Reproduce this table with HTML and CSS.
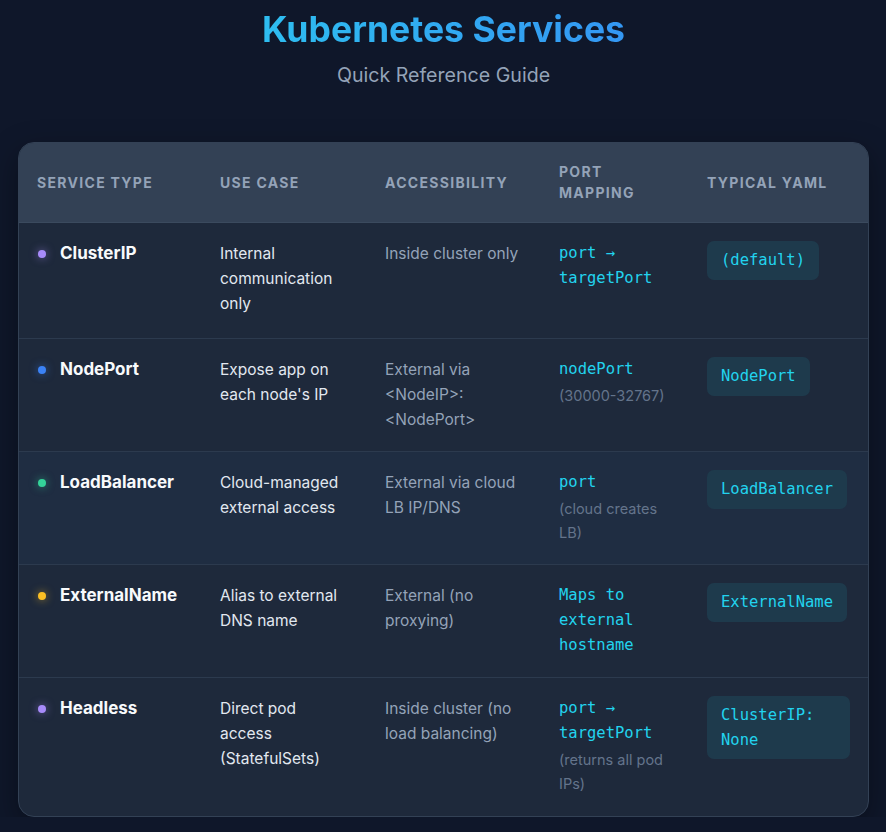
FILE: index.html
```html
<!DOCTYPE html>
<html lang="en">
<head>
<meta charset="utf-8">
<title>Kubernetes Services</title>
<link rel="stylesheet" href="styles.css">
</head>
<body>
<header class="hero">
  <h1 class="title"><span class="title-text">Kubernetes Services</span></h1>
  <p class="subtitle">Quick Reference Guide</p>
</header>
<div class="card">
  <table class="svc-table">
    <colgroup>
      <col class="c1"><col class="c2"><col class="c3"><col class="c4"><col class="c5">
    </colgroup>
    <thead>
      <tr>
        <th>Service Type</th>
        <th>Use Case</th>
        <th>Accessibility</th>
        <th>Port Mapping</th>
        <th>Typical YAML</th>
      </tr>
    </thead>
    <tbody>
      <tr class="tall">
        <td><div class="name"><span class="dot dot-purple"></span>ClusterIP</div></td>
        <td class="use">Internal communication only</td>
        <td class="access">Inside cluster only</td>
        <td><div class="port">port → targetPort</div></td>
        <td><span class="badge">(default)</span></td>
      </tr>
      <tr>
        <td><div class="name"><span class="dot dot-blue"></span>NodePort</div></td>
        <td class="use">Expose app on each node's IP</td>
        <td class="access">External via &lt;NodeIP&gt;:&lt;NodePort&gt;</td>
        <td><div class="port">nodePort</div><div class="note">(30000-32767)</div></td>
        <td><span class="badge">NodePort</span></td>
      </tr>
      <tr class="hl">
        <td><div class="name"><span class="dot dot-green"></span>LoadBalancer</div></td>
        <td class="use">Cloud-managed external access</td>
        <td class="access">External via cloud LB IP/DNS</td>
        <td><div class="port">port</div><div class="note">(cloud creates LB)</div></td>
        <td><span class="badge">LoadBalancer</span></td>
      </tr>
      <tr>
        <td><div class="name"><span class="dot dot-amber"></span>ExternalName</div></td>
        <td class="use">Alias to external DNS name</td>
        <td class="access">External (no proxying)</td>
        <td><div class="port">Maps to external hostname</div></td>
        <td><span class="badge">ExternalName</span></td>
      </tr>
      <tr class="last">
        <td><div class="name"><span class="dot dot-purple"></span>Headless</div></td>
        <td class="use">Direct pod access (StatefulSets)</td>
        <td class="access">Inside cluster (no load balancing)</td>
        <td><div class="port">port → targetPort</div><div class="note">(returns all pod IPs)</div></td>
        <td><span class="badge">ClusterIP: None</span></td>
      </tr>
    </tbody>
  </table>
</div>
</body>
</html>
```
FILE: styles.css
```css
* { box-sizing: border-box; }
html, body { margin: 0; padding: 0; }
body {
  background: #0f172a;
  font-family: Inter, "Noto Sans", sans-serif;
  color: #e2e8f0;
  padding: 0 17px 0 18px;
}
.hero {
  text-align: center;
  padding-top: 9px;
}
.title {
  margin: 0;
  font-size: 35.6px;
  line-height: 42px;
  font-weight: 700;
}
.title-text {
  background: linear-gradient(90deg, #2ebdf0, #3497f3);
  -webkit-background-clip: text;
  background-clip: text;
  color: transparent;
}
.subtitle {
  margin: 11px 0 0;
  font-size: 19.6px;
  line-height: 26px;
  color: #94a3b8;
}
.card {
  margin-top: 54px;
  border: 1px solid #334155;
  border-radius: 16px;
  overflow: hidden;
  background: #1e293b;
  box-shadow: 0 10px 30px rgba(0,0,0,0.35);
}
.svc-table {
  width: 100%;
  border-collapse: collapse;
  table-layout: fixed;
}
.c1 { width: 183px; }
.c2 { width: 165px; }
.c3 { width: 174px; }
.c4 { width: 148px; }
.c5 { width: 179px; }
thead th {
  background: #334155;
  color: #94a3b8;
  text-align: left;
  text-transform: uppercase;
  font-size: 14px;
  font-weight: 700;
  letter-spacing: 1.3px;
  line-height: 21px;
  padding: 18px 18px 19px;
  vertical-align: middle;
  border-bottom: 1px solid #3b4a5e;
}
tbody td {
  vertical-align: top;
  padding: 18px 18px 19px;
  font-size: 15.5px;
  line-height: 25px;
  border-bottom: 1px solid #2c3a4e;
}
tbody tr.tall td { padding-bottom: 22px; }
tbody tr.last td { padding-bottom: 20px; }
tbody tr:last-child td { border-bottom: none; }
tbody tr.hl td { background: #1f2d42; }
.name {
  display: flex;
  align-items: center;
  gap: 14px;
  font-size: 17px;
  font-weight: 700;
  color: #f8fafc;
}
.dot {
  width: 8px;
  height: 8px;
  border-radius: 50%;
  flex: none;
  margin-left: 1px;
}
.dot-purple { background: #a78bfa; box-shadow: 0 0 8px rgba(167,139,250,0.6); }
.dot-blue { background: #3b82f6; box-shadow: 0 0 8px rgba(59,130,246,0.6); }
.dot-green { background: #34d399; box-shadow: 0 0 8px rgba(52,211,153,0.6); }
.dot-amber { background: #fbbf24; box-shadow: 0 0 8px rgba(251,191,36,0.6); }
.use { color: #e2e8f0; }
.access { color: #94a3b8; }
.port {
  font-family: "DejaVu Sans Mono", monospace;
  font-size: 15.5px;
  line-height: 25px;
  color: #22d3ee;
}
.note {
  margin-top: 2px;
  font-size: 14.5px;
  line-height: 24px;
  color: #64748b;
}
.badge {
  display: inline-block;
  font-family: "DejaVu Sans Mono", monospace;
  font-size: 15.5px;
  line-height: 24.5px;
  color: #22d3ee;
  background: #1e3a4c;
  border-radius: 7px;
  padding: 7px 14px;
}
```
